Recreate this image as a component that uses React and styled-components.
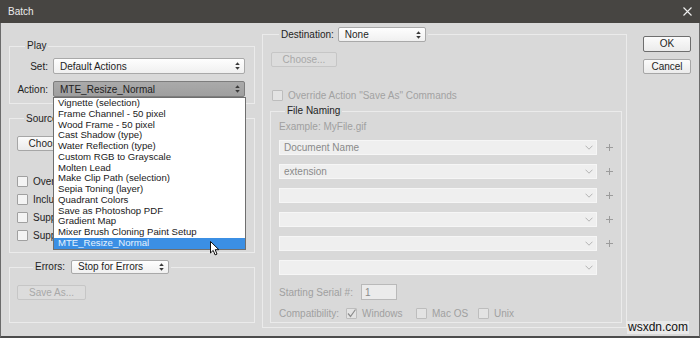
import React from 'react';
import styled, { createGlobalStyle } from 'styled-components';

const Global = createGlobalStyle`
  html, body { margin: 0; padding: 0; background: #d9d9d9; }
  body { font-family: "Liberation Sans", Arial, sans-serif; font-size: 10px; color: #1e1e1e; }
  * { box-sizing: border-box; }
`;

const Dialog = styled.div`
  position: relative;
  width: 700px;
  height: 338px;
  display: flex;
  flex-direction: column;
  background: #d9d9d9;
  overflow: hidden;
`;

const TitleBar = styled.div`
  height: 23px;
  flex: none;
  display: flex;
  align-items: center;
  justify-content: space-between;
  padding: 0 8px 0 8px;
  background: #474542;
  color: #ececec;
  font-size: 10px;
`;

const Body = styled.div`
  flex: 1;
  display: flex;
  align-items: flex-start;
  padding: 4px 0 0 8px;
  border-left: 1px solid #6b6b6b;
  border-right: 1px solid #6b6b6b;
  border-bottom: 2px solid #4c4c4c;
`;

const LeftCol = styled.div`
  width: 246px;
  flex: none;
  display: flex;
  flex-direction: column;
`;

const Group = styled.fieldset`
  margin: ${p => p.$mt || 0}px 0 0 0;
  padding: ${p => p.$pad};
  width: ${p => (p.$w ? `${p.$w}px` : 'auto')};
  border: 1px solid #ebebeb;
  min-width: 0;
  flex: none;
  position: relative;
  display: flex;
  flex-direction: column;
  align-items: flex-start;
`;

const Legend = styled.legend`
  margin-left: ${p => p.$ml}px;
  padding: 0 2px;
  display: flex;
  align-items: center;
  gap: ${p => p.$gap || 6}px;
  line-height: 12px;
  color: ${p => (p.$dim ? '#a0a0a0' : '#1e1e1e')};
`;

const FormGrid = styled.div`
  display: grid;
  grid-template-columns: 34px 192px;
  column-gap: 5px;
  row-gap: 7px;
  align-items: center;
`;

const Label = styled.span`
  text-align: right;
  white-space: nowrap;
`;

const SelectBox = styled.div`
  display: flex;
  align-items: center;
  justify-content: space-between;
  width: ${p => p.$w}px;
  height: ${p => p.$h || 16}px;
  padding: 0 4px 0 6px;
  border: 1px solid ${p => (p.$active ? '#7d7d7d' : '#a9a9a9')};
  border-radius: 2px;
  background: ${p => (p.$active ? 'linear-gradient(#aaaaaa, #9f9f9f)' : 'linear-gradient(#fefefe, #f0f0f0)')};
  color: #1e1e1e;
  white-space: nowrap;
`;

const MenuAnchor = styled.div`
  position: relative;
`;

const Menu = styled.div`
  position: absolute;
  top: 16px;
  left: 0;
  width: 193px;
  z-index: 5;
  background: #ffffff;
  border: 1px solid #6f6f6f;
  display: flex;
  flex-direction: column;
  font-size: 9.6px;
`;

const MenuItem = styled.div`
  height: 10.75px;
  line-height: 10.75px;
  padding-left: 4px;
  white-space: nowrap;
  overflow: hidden;
  color: ${p => (p.$sel ? '#e6f3ff' : '#1a1a1a')};
  background: ${p => (p.$sel ? '#3b8fe4' : 'transparent')};
`;

const CursorWrap = styled.div`
  position: absolute;
  left: 156px;
  top: 143px;
  width: 10px;
  height: 15px;
  line-height: 0;
`;

const Button = styled.button`
  font: inherit;
  width: ${p => p.$w}px;
  height: ${p => p.$h || 15}px;
  margin-left: ${p => p.$ml || 0}px;
  padding: 0;
  flex: none;
  border: 1px solid ${p => (p.$primary ? '#6e6e6e' : p.disabled ? '#c6c6c6' : '#a6a6a6')};
  border-radius: 2px;
  background: ${p => (p.disabled ? '#dcdcdc' : 'linear-gradient(#fbfbfb, #ebebeb)')};
  color: ${p => (p.disabled ? '#a8a8a8' : '#1e1e1e')};
  line-height: 1;
`;

const CheckList = styled.div`
  margin-top: 21px;
  display: flex;
  flex-direction: column;
`;

const CheckRow = styled.div`
  display: flex;
  align-items: center;
  gap: 5px;
  height: ${p => p.$h || 18}px;
  margin-top: ${p => p.$mt || 0}px;
  margin-left: ${p => p.$ml || 0}px;
  color: ${p => (p.$dim ? '#a2a2a2' : '#1e1e1e')};
  white-space: nowrap;
`;

const Box = styled.span`
  width: 11px;
  height: 11px;
  flex: none;
  display: inline-flex;
  align-items: center;
  justify-content: center;
  border: 1px solid ${p => (p.$dim ? '#bdbdbd' : '#a0a0a0')};
  border-radius: 1px;
  background: ${p => (p.$dim ? '#e3e3e3' : '#f4f4f4')};
`;

const Dim = styled.div`
  color: #a0a0a0;
  line-height: 12px;
  white-space: nowrap;
`;

const ComboList = styled.div`
  margin-top: 7px;
  display: flex;
  flex-direction: column;
  gap: 9px;
  align-self: stretch;
`;

const ComboRow = styled.div`
  display: flex;
  align-items: center;
`;

const Combo = styled.div`
  width: 318px;
  height: 15px;
  flex: none;
  display: flex;
  align-items: center;
  justify-content: space-between;
  padding: 0 3px 0 4px;
  background: #efefef;
  border: 1px solid #f6f6f6;
  color: #8a8a8a;
`;

const PlusCell = styled.div`
  flex: 1;
  display: flex;
  justify-content: center;
  line-height: 0;
`;

const SerialRow = styled.div`
  margin-top: 9px;
  display: flex;
  align-items: center;
  color: #a0a0a0;
`;

const FixedLabel = styled.span`
  width: ${p => p.$w}px;
  flex: none;
  white-space: nowrap;
`;

const SerialInput = styled.div`
  width: 36px;
  height: 16px;
  padding-left: 3px;
  display: flex;
  align-items: center;
  background: #ebebeb;
  border: 1px solid #b9b9b9;
  color: #8a8a8a;
`;

const CompatRow = styled.div`
  margin-top: 6px;
  height: 14px;
  display: flex;
  align-items: center;
  color: #a0a0a0;
`;

const Option = styled.div`
  width: ${p => p.$w}px;
  flex: none;
  display: flex;
  align-items: center;
  gap: 5px;
  white-space: nowrap;
`;

const ButtonCol = styled.div`
  margin-left: 16px;
  margin-top: 9px;
  display: flex;
  flex-direction: column;
  gap: 7px;
`;

const Watermark = styled.div`
  position: absolute;
  right: 11px;
  bottom: 4px;
  padding: 0 1px;
  font-size: 12px;
  line-height: 13px;
  color: #111;
  background: rgba(240, 240, 240, 0.7);
`;

const UpDown = () => (
  <svg width="5" height="8" viewBox="0 0 5 8">
    <path d="M2.5 0.3L4.8 3H0.2z M2.5 7.7L0.2 5h4.6z" fill="#3a3a3a" />
  </svg>
);

const Close = () => (
  <svg width="9" height="9" viewBox="0 0 9 9">
    <path d="M0.5 0.5L8.5 8.5M8.5 0.5L0.5 8.5" stroke="#f0f0f0" strokeWidth="1.1" />
  </svg>
);

const Chevron = () => (
  <svg width="8" height="5" viewBox="0 0 8 5">
    <path d="M0.5 0.7L4 4.2L7.5 0.7" stroke="#b3b3b3" strokeWidth="1" fill="none" />
  </svg>
);

const Plus = () => (
  <svg width="7" height="7" viewBox="0 0 7 7">
    <path d="M3.5 0V7M0 3.5H7" stroke="#9c9c9c" strokeWidth="1" />
  </svg>
);

const Tick = () => (
  <svg width="9" height="9" viewBox="0 0 9 9">
    <path d="M1 4.5L3.5 7.5L8.5 0.5" stroke="#8c8c8c" strokeWidth="1.2" fill="none" />
  </svg>
);

const Cursor = () => (
  <CursorWrap>
    <svg width="10" height="15" viewBox="0 0 10 15">
      <path d="M0.5 0.5L0.5 12L3.2 9.4L5.1 13.9L7 13.1L5.2 8.7L8.9 8.7Z" fill="#fff" stroke="#111" strokeWidth="1" strokeLinejoin="round" />
    </svg>
  </CursorWrap>
);

const actions = [
  'Vignette (selection)',
  'Frame Channel - 50 pixel',
  'Wood Frame - 50 pixel',
  'Cast Shadow (type)',
  'Water Reflection (type)',
  'Custom RGB to Grayscale',
  'Molten Lead',
  'Make Clip Path (selection)',
  'Sepia Toning (layer)',
  'Quadrant Colors',
  'Save as Photoshop PDF',
  'Gradient Map',
  'Mixer Brush Cloning Paint Setup',
  'MTE_Resize_Normal',
];

const sourceChecks = [
  'Override Action "Open" Commands',
  'Include All Subfolders',
  'Suppress File Open Options Dialogs',
  'Suppress Color Profile Warnings',
];

const combos = ['Document Name', 'extension', '', '', '', ''];

export default function App() {
  return (
    <>
      <Global />
      <Dialog>
        <TitleBar>
          <span>Batch</span>
          <Close />
        </TitleBar>
        <Body>
          <LeftCol>
            <Group $mt={13} $pad="6px 9px 6px 4px">
              <Legend $ml={11}>Play</Legend>
              <FormGrid>
                <Label>Set:</Label>
                <SelectBox $w={192}>
                  Default Actions
                  <UpDown />
                </SelectBox>
                <Label>Action:</Label>
                <MenuAnchor>
                  <SelectBox $w={192} $active>
                    MTE_Resize_Normal
                    <UpDown />
                  </SelectBox>
                  <Menu>
                    {actions.map((a, i) => (
                      <MenuItem key={a} $sel={i === actions.length - 1}>{a}</MenuItem>
                    ))}
                    <Cursor />
                  </Menu>
                </MenuAnchor>
              </FormGrid>
            </Group>

            <Group $mt={7} $pad="10px 7px 8px 7px">
              <Legend $ml={7}>
                Source:
                <SelectBox $w={90} $h={15}>
                  Folder
                  <UpDown />
                </SelectBox>
              </Legend>
              <Button $w={66}>Choose...</Button>
              <CheckList>
                {sourceChecks.map(c => (
                  <CheckRow key={c}>
                    <Box />
                    {c}
                  </CheckRow>
                ))}
              </CheckList>
            </Group>

            <Group $mt={7} $pad="11px 7px 22px 7px">
              <Legend $ml={16}>
                Errors:
                <SelectBox $w={98} $h={14}>
                  Stop for Errors
                  <UpDown />
                </SelectBox>
              </Legend>
              <Button disabled $w={69}>Save As...</Button>
            </Group>
          </LeftCol>

          <Group $mt={0} $w={365} $pad="10px 4px 4px 7px" style={{ marginLeft: 7 }}>
            <Legend $ml={9} $gap={4}>
              Destination:
              <SelectBox $w={88} $h={15}>
                None
                <UpDown />
              </SelectBox>
            </Legend>
            <Button disabled $w={66} $ml={1}>Choose...</Button>
            <CheckRow $dim $h={12} $mt={22} $ml={2}>
              <Box $dim />
              Override Action "Save As" Commands
            </CheckRow>
            <Group $mt={4} $pad="4px 0 2px 8px" style={{ alignSelf: 'stretch' }}>
              <Legend $ml={6}>File Naming</Legend>
              <Dim>Example: MyFile.gif</Dim>
              <ComboList>
                {combos.map((c, i) => (
                  <ComboRow key={i}>
                    <Combo>
                      <span>{c}</span>
                      <Chevron />
                    </Combo>
                    <PlusCell>{i < 5 ? <Plus /> : null}</PlusCell>
                  </ComboRow>
                ))}
              </ComboList>
              <SerialRow>
                <FixedLabel $w={82}>Starting Serial #:</FixedLabel>
                <SerialInput>1</SerialInput>
              </SerialRow>
              <CompatRow>
                <FixedLabel $w={67}>Compatibility:</FixedLabel>
                <Option $w={70}>
                  <Box $dim><Tick /></Box>
                  Windows
                </Option>
                <Option $w={62}>
                  <Box $dim />
                  Mac OS
                </Option>
                <Option $w={50}>
                  <Box $dim />
                  Unix
                </Option>
              </CompatRow>
            </Group>
          </Group>

          <ButtonCol>
            <Button $primary $w={48} $h={16}>OK</Button>
            <Button $w={48} $h={15}>Cancel</Button>
          </ButtonCol>
        </Body>
        <Watermark>wsxdn.com</Watermark>
      </Dialog>
    </>
  );
}
